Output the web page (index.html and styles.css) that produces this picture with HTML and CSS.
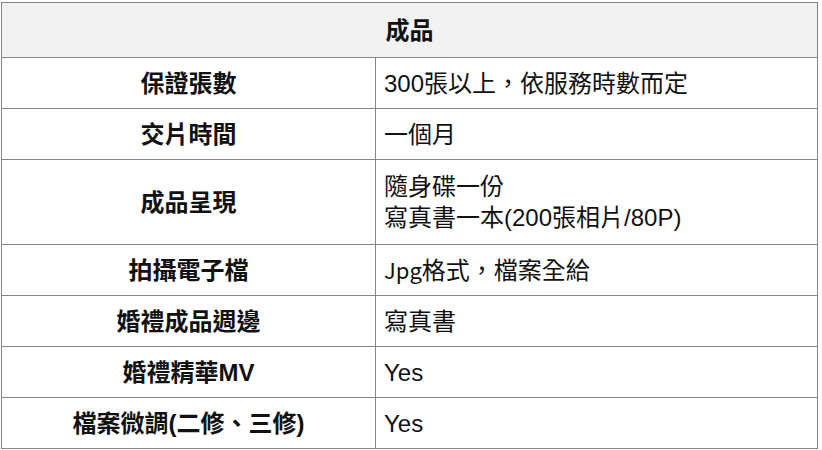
FILE: index.html
```html
<!DOCTYPE html>
<html lang="zh-Hant">
<head>
<meta charset="utf-8">
<title>成品</title>
<link rel="stylesheet" href="styles.css">
</head>
<body>
<table class="spec">
  <colgroup>
    <col class="col-label">
    <col class="col-value">
  </colgroup>
  <thead>
    <tr class="head-row"><th colspan="2">成品</th></tr>
  </thead>
  <tbody>
    <tr><td class="label">保證張數</td><td class="value">300張以上，依服務時數而定</td></tr>
    <tr><td class="label">交片時間</td><td class="value">一個月</td></tr>
    <tr class="tall"><td class="label">成品呈現</td><td class="value">隨身碟一份<br>寫真書一本(200張相片/80P)</td></tr>
    <tr><td class="label">拍攝電子檔</td><td class="value"><span class="alt">Jpg</span>格式，檔案全給</td></tr>
    <tr><td class="label">婚禮成品週邊</td><td class="value">寫真書</td></tr>
    <tr><td class="label">婚禮精華MV</td><td class="value">Yes</td></tr>
    <tr><td class="label">檔案微調(二修、三修)</td><td class="value">Yes</td></tr>
  </tbody>
</table>
</body>
</html>
```
FILE: styles.css
```css
html, body {
  margin: 0;
  padding: 0;
  background: #ffffff;
}
body {
  padding: 2px 0 0 1px;
  font-family: "Liberation Sans", "Noto Sans CJK TC", sans-serif;
  font-size: 24px;
  color: #111;
}
.spec {
  border-collapse: collapse;
  width: 817px;
  table-layout: fixed;
}
.col-label {
  width: 374px;
}
.spec th,
.spec td {
  border: 1px solid #858585;
  padding: 0 8px;
  line-height: 31px;
}
.head-row th {
  background: #f2f2f2;
  height: 54px;
  font-weight: bold;
  text-align: center;
}
.spec tbody tr {
  height: 51px;
}
.spec tbody tr.tall {
  height: 85px;
}
.label {
  text-align: center;
  font-weight: bold;
}
.value {
  text-align: left;
}
.alt {
  font-family: "Noto Sans CJK TC", sans-serif;
  font-size: 22px;
}
```
